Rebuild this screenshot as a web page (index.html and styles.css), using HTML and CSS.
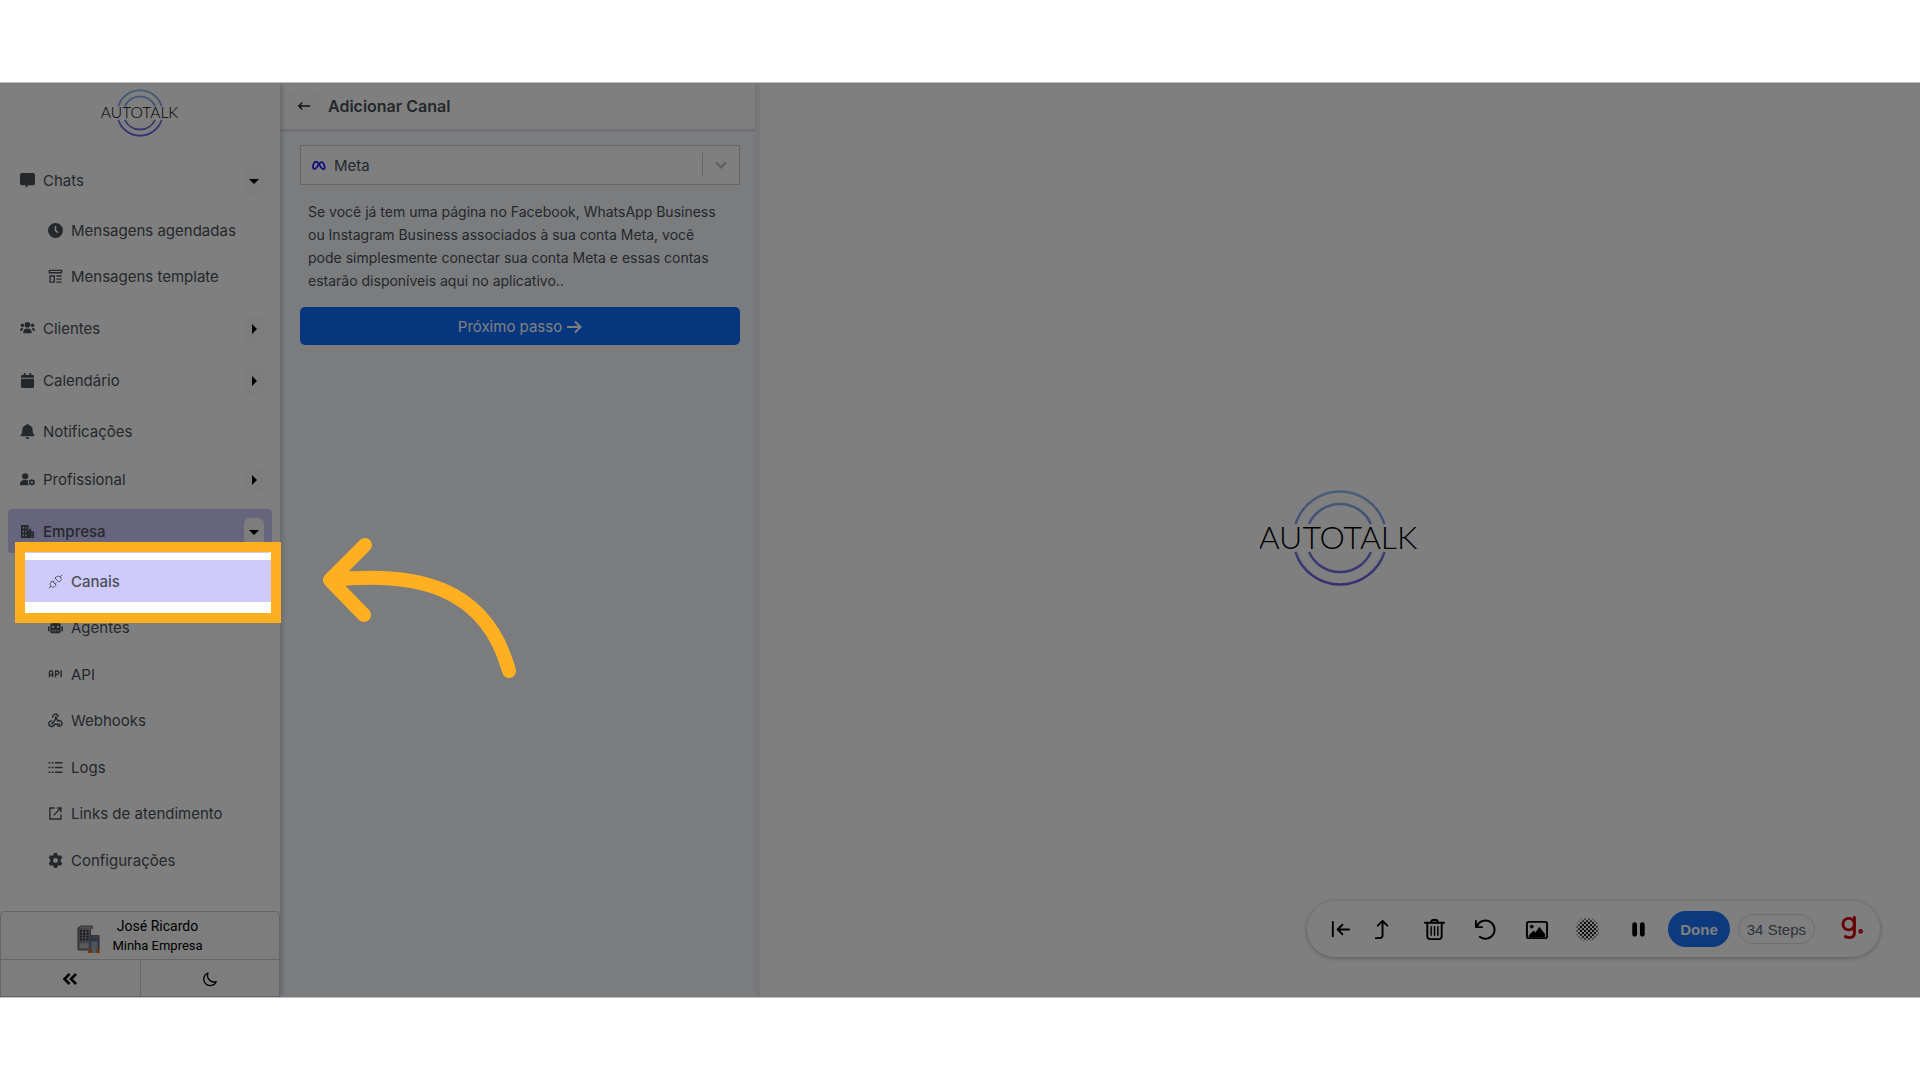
FILE: index.html
```html
<!DOCTYPE html>
<html lang="pt-BR">
<head>
    <meta charset="UTF-8">
    <meta name="viewport" content="width=device-width, initial-scale=1.0">
    <title>Autotalk - Adicionar Canal</title>
    <link rel="stylesheet" href="styles.css">
</head>
<body>
    <div class="app">
        <aside class="sidebar">
            <a href="#" class="brand" aria-label="Autotalk">
                <svg class="logo logo-small" viewBox="0 0 160 98">
                    <defs>
                        <linearGradient id="ring" gradientUnits="userSpaceOnUse" x1="0" y1="3" x2="0" y2="95">
                            <stop offset="0" stop-color="#8fbdf0"/>
                            <stop offset="1" stop-color="#6b5fe0"/>
                        </linearGradient>
                    </defs>
                    <g fill="none" stroke="url(#ring)" stroke-width="4">
                        <path d="M35.500 35A46.700 46.700 0 0 1 124.500 35M49 35A34 34 0 0 1 111 35M35.500 63A46.700 46.700 0 0 0 124.500 63M49 63A34 34 0 0 0 111 63"/>
                    </g>
                    <text x="79" y="60" text-anchor="middle">AUTOTALK</text>
                </svg>
            </a>
            <nav class="menu">
                <div class="item">
                    <a href="#"><svg viewBox="0 0 16 16"><path d="M2 0h12a2 2 0 0 1 2 2v9a2 2 0 0 1-2 2H9L6 16v-3H2a2 2 0 0 1-2-2V2a2 2 0 0 1 2-2z"/></svg>Chats</a>
                    <button type="button" class="toggle open" aria-label="Abrir Chats"></button>
                </div>
                <ul class="sub">
                    <li><a href="#"><svg viewBox="0 0 16 16"><path fill-rule="evenodd" d="M8 0a8 8 0 1 0 0 16A8 8 0 0 0 8 0zM7.200 3.200h1.600v4.500l2.400 1.800-.9 1.300-3.100-2.300z"/></svg>Mensagens agendadas</a></li>
                    <li><a href="#"><svg viewBox="0 0 16 16" class="line"><path stroke-width="1.500" d="M1.500 1.500h13v2.500h-13zM2.200 7.500h4.500v6.500H2.200zM9 7.500h5.500M9 10.800h5.500M9 14h5.500"/></svg>Mensagens template</a></li>
                </ul>
                <div class="item">
                    <a href="#"><svg viewBox="0 0 16 16"><circle cx="8" cy="4" r="3"/><circle cx="2.600" cy="4.500" r="1.900"/><circle cx="13.400" cy="4.500" r="1.900"/><path d="M3.500 13c0-3.500 1.500-5 4.500-5s4.500 1.500 4.500 5zM0 10.500C0 8 1 7 3.800 7.200 2.800 8.200 2.500 9.500 2.500 10.500zM16 10.500C16 8 15 7 12.200 7.200c1 1 1.300 2.300 1.300 3.300z"/></svg>Clientes</a>
                    <button type="button" class="toggle" aria-label="Abrir Clientes"></button>
                </div>
                <div class="item">
                    <a href="#"><svg viewBox="0 0 16 16"><path d="M4 0h2v2h4V0h2v2h1.500A1.500 1.500 0 0 1 15 3.500V5H1V3.500A1.500 1.500 0 0 1 2.500 2H4zM1 6h14v8.500a1.500 1.500 0 0 1-1.500 1.500h-11A1.500 1.500 0 0 1 1 14.500z"/></svg>Calendário</a>
                    <button type="button" class="toggle" aria-label="Abrir Calendário"></button>
                </div>
                <div class="item item-plain">
                    <a href="#"><svg viewBox="0 0 16 16"><path d="M7 0h2v1c3 .5 4.500 2.500 4.500 5 0 3 .5 4.200 1.700 5.500V13H.8v-1.500C2 10.200 2.500 9 2.500 6c0-2.500 1.500-4.500 4.500-5zM6 14h4a2 2 0 0 1-4 0z"/></svg>Notificações</a>
                </div>
                <div class="item">
                    <a href="#"><svg viewBox="0 0 16 16"><circle cx="5.500" cy="4.500" r="3.300"/><path d="M0 14c0-4 1.500-5.500 5.500-5.500 1.500 0 2.700.3 3.500.8L8.300 11 9.500 14z"/><circle cx="12.700" cy="11" r="2" fill="none" stroke="currentColor" stroke-width="1.700"/><path d="M12 7.500h1.400v1.500H12zM12 13h1.400v1.500H12zM9.300 9.500l.7-1.200 1.300.8-.7 1.200zM14.100 12.900l.7-1.200 1.300.8-.7 1.200zM9.300 12.500l1.300-.8.7 1.200-1.300.8zM14.100 9.100l1.300-.8.7 1.200-1.300.8z"/></svg>Profissional</a>
                    <button type="button" class="toggle" aria-label="Abrir Profissional"></button>
                </div>
                <div class="item active">
                    <a href="#"><svg viewBox="0 0 16 16"><path fill-rule="evenodd" d="M1 1h8v6h1V5h2v3h3v7H1zM3 3v2h1.200V3zM5.800 3v2H7V3zM3 7v2h1.200V7zM5.800 7v2H7V7zM3 11v2h1.200v-2zM5.800 11v2H7v-2zM12 10v1.200h1.500V10zM12 12.500v1h1.500v-1z"/></svg>Empresa</a>
                    <button type="button" class="toggle open" aria-label="Abrir Empresa"></button>
                </div>
                <ul class="sub sub-fill">
                    <li class="current">
                        <a href="#"><svg viewBox="0 0 16 16" class="line"><path d="M.8 15.200l2.500-2.500M12.700 3.300L15.200.8M4.200 7.300L8.700 11.800 7 13.500c-1.300 1-3 .7-3.700-.3-1-.9-1.200-2.600-.6-3.700zM7.300 4.200L11.800 8.700 13.500 7c1-1.300.7-3-.3-3.700-.9-1-2.600-1.200-3.700-.6zM5.500 8.500l1.500-1.500M7.500 10.500L9 9"/></svg>Canais</a>
                        <span class="spotlight"></span>
                    </li>
                    <li><a href="#"><svg viewBox="0 0 16 16"><path fill-rule="evenodd" d="M7.200 1h1.600v2.500H12A1.500 1.500 0 0 1 13.500 5v7.500A1.500 1.500 0 0 1 12 14H4a1.500 1.500 0 0 1-1.500-1.500V5A1.500 1.500 0 0 1 4 3.500h3.200zM5.500 6a1.200 1.200 0 1 0 0 2.400 1.200 1.200 0 0 0 0-2.400zM10.500 6a1.200 1.200 0 1 0 0 2.400 1.200 1.200 0 0 0 0-2.400zM4.500 11v1h1.600v-1zM7.200 11v1h1.600v-1zM9.900 11v1h1.600v-1zM0 7h1.700v5H0zM14.300 7H16v5h-1.700z"/></svg>Agentes</a></li>
                    <li><a href="#"><svg viewBox="0 0 16 16" class="line"><path stroke-width="1.500" d="M1.500 11V6Q1.500 4 3.200 4T5 6v5M1.500 8.200H5M8 11V4.300h1.800q1.700 0 1.700 1.900t-1.700 1.900H8M14 3.500V11"/></svg>API</a></li>
                    <li><a href="#"><svg viewBox="0 0 16 16" class="line"><path stroke-width="1.500" d="M5.200 5A2.900 2.900 0 1 1 10.800 4.500M8 3.500L10.500 8.500a3 3 0 1 1-.5 5M8 3.500q1 3-2 6M4.500 8.500a3 3 0 1 0 2.300 3.500h6M3.500 12L6 9.500"/></svg>Webhooks</a></li>
                    <li><a href="#"><svg viewBox="0 0 16 16" class="line"><path stroke-width="1.500" d="M.5 3h2M4 3h2M7.500 3h8M.5 8h2M4 8h2M7.500 8h8M.5 13h2M4 13h2M7.500 13h8"/></svg>Logs</a></li>
                    <li><a href="#"><svg viewBox="0 0 16 16" class="line"><path stroke-width="1.500" d="M7 2.200H2v11.600h11.800V9M9.500 2.200h4.300v4.300M13.500 2.500L6 10"/></svg>Links de atendimento</a></li>
                    <li><a href="#"><svg viewBox="0 0 16 16"><path fill-rule="evenodd" d="M6.400 0h3.200l.5 2.200 1.400.8 2.200-.7 1.600 2.800L13.600 6.700v2.600l1.700 1.600-1.600 2.800-2.200-.7-1.400.8-.5 2.200H6.400l-.5-2.200-1.400-.8-2.200.7L.7 10.900l1.700-1.600V6.700L.7 5.100l1.600-2.800 2.200.7 1.400-.8zM8 5.400a2.600 2.600 0 1 0 0 5.200 2.600 2.600 0 0 0 0-5.200z"/></svg>Configurações</a></li>
                </ul>
            </nav>
            <footer class="account">
                <button type="button" class="profile">
                    <svg viewBox="0 0 24 30">
                        <rect x="1" y="3" width="13" height="23" rx="1" fill="#8a8d96" stroke="#55565c"/>
                        <path d="M1 3l3-2h12v3" fill="#a5a5ac" stroke="#55565c"/>
                        <path d="M4 5v12M7.500 5v12M11 5v12" stroke="#30313b" stroke-width="2" stroke-dasharray="2 1"/>
                        <path d="M3 19h9v5H3z" fill="#b5b5b5"/>
                        <path d="M14 11h9v15h-9z" fill="#8b7468" stroke="#5a5560"/>
                        <circle cx="18" cy="18" r="5" fill="#596f91"/>
                        <path d="M15 17h6l1 9h-8z" fill="#95a8b5"/>
                        <path d="M11 29q1-4 5-4l2 2 2-2q4 0 4 4z" fill="#e0681c"/>
                        <path d="M16 25h4v4h-4z" fill="#a5b8c5"/>
                    </svg>
                    <span class="who"><span>José Ricardo</span><small>Minha Empresa</small></span>
                </button>
                <div class="account-actions">
                    <button type="button" aria-label="Recolher menu"><svg viewBox="0 0 16 16"><path d="M7.500 3l-5 5 5 5M14 3L9 8l5 5" fill="none" stroke="currentColor" stroke-width="2.500"/></svg></button>
                    <button type="button" aria-label="Modo escuro"><svg viewBox="0 0 16 16"><path d="M6 2A6.500 6.500 0 1 0 14.300 10.500 6.500 6.500 0 0 1 6 2z" fill="none" stroke="currentColor" stroke-width="1.300" stroke-linejoin="round"/></svg></button>
                </div>
            </footer>
        </aside>

        <section class="panel">
            <header class="panel-header">
                <button type="button" class="back" aria-label="Voltar"><svg viewBox="0 0 16 16"><path d="M15 8H2.500M6 4L2 8l4 4" fill="none" stroke="currentColor" stroke-width="1.500"/></svg></button>
                <h1>Adicionar Canal</h1>
            </header>
            <form class="channel-form">
                <div class="select-box">
                    <svg class="meta" viewBox="0 0 16 16"><path d="M3 12.500C.5 12.500 1 8.500 2 6.500c1.300-3 3.500-3 5.500 0l3 4.500c1.700 2.500 4 2 4 0 0-2-.4-3.200-1.200-4.500-1.300-2.200-3.300-2.200-5 0L5.500 10.500C4.500 12 4 12.500 3 12.500z"/></svg>
                    <select aria-label="Canal">
                        <option>Meta</option>
                    </select>
                    <svg class="chevron" viewBox="0 0 20 20"><path d="M5 7.500l5 5 5-5"/></svg>
                </div>
                <p>Se você já tem uma página no Facebook, WhatsApp Business ou Instagram Business associados à sua conta Meta, você pode simplesmente conectar sua conta Meta e essas contas estarão disponíveis aqui no aplicativo..</p>
                <button type="button" class="next">Próximo passo <svg viewBox="0 0 16 16"><path d="M1 9h13M9 3.500L14.500 9 9 14.500"/></svg></button>
            </form>
        </section>

        <main class="stage">
            <svg class="logo" viewBox="0 0 160 98" role="img" aria-label="Autotalk">
                <g fill="none" stroke="url(#ring)" stroke-width="2.500">
                    <path d="M35.500 35A46.700 46.700 0 0 1 124.500 35M49 35A34 34 0 0 1 111 35M35.500 63A46.700 46.700 0 0 0 124.500 63M49 63A34 34 0 0 0 111 63"/>
                </g>
                <text x="78" y="60" text-anchor="middle">AUTOTALK</text>
            </svg>
        </main>

        <!-- gravador de passos -->
        <div class="recorder">
            <button type="button" class="collapse" aria-label="Encolher"><svg viewBox="0 0 24 24"><path d="M4 4v15M21 12H9M14 7l-5 5 5 5"/></svg></button>
            <button type="button" aria-label="Mover"><svg viewBox="0 0 24 24"><path d="M4 21h4q3 0 3-3V3M6 8l5-5 5 5"/></svg></button>
            <button type="button" aria-label="Excluir"><svg viewBox="0 0 24 24"><path d="M2 5h20M8.500 5q0-3 2-3h3q2 0 2 3M4.500 5v14q0 3 3 3h9q3 0 3-3V5"/><path stroke-width="1.500" d="M8.500 9v9M12 9v9M15.500 9v9"/></svg></button>
            <button type="button" aria-label="Desfazer"><svg viewBox="0 0 24 24"><path d="M2 3v6.500h6.500M3 9A9.500 9.500 0 1 1 6 19.500"/></svg></button>
            <button type="button" aria-label="Imagem"><svg viewBox="0 0 24 24"><rect x="2" y="4" width="21" height="17" rx="2"/><circle cx="7" cy="9" r="1.500" fill="currentColor" stroke-width="1"/><path d="M4 18l5-5 2 2 4-6 6 8v3H4z" fill="currentColor" stroke="none"/></svg></button>
            <button type="button" aria-label="Desfocar">
                <svg viewBox="0 0 23 23">
                    <defs>
                        <pattern id="dots" width="4" height="4" patternUnits="userSpaceOnUse"><circle cx="1" cy="1" r="1.100" fill="#000" stroke="none"/><circle cx="3" cy="3" r="1.100" fill="#000" stroke="none"/></pattern>
                        <radialGradient id="fade"><stop offset=".6" stop-color="#fff"/><stop offset="1" stop-color="#000"/></radialGradient>
                        <mask id="soft"><circle cx="11.500" cy="11.500" r="13" fill="url(#fade)" stroke="none"/></mask>
                    </defs>
                    <rect width="23" height="23" fill="url(#dots)" stroke="none" mask="url(#soft)"/>
                </svg>
            </button>
            <button type="button" class="pause" aria-label="Pausar"><svg viewBox="0 0 24 24"><path d="M8 7v10M16 7v10" stroke-width="5"/></svg></button>
            <button type="button" class="done">Done</button>
            <button type="button" class="steps">34 Steps</button>
            <a href="#" class="guide" aria-label="Guia"><svg viewBox="0 0 24 24"><circle cx="8" cy="8.500" r="6"/><path d="M14 1.500v16q0 5-5 5-2.500 0-4.500-1"/><circle cx="20.500" cy="16" r="1"/></svg></a>
        </div>

        <svg class="pointer" viewBox="0 0 200 145" aria-hidden="true"><path d="M49 9L14 44 48 79M14 44C100 35 170 50 193 135"/></svg>
    </div>
</body>
</html>
```
FILE: styles.css
```css
* {
    box-sizing: border-box;
}

body {
    margin: 0;
    padding: 82px 0;
    min-height: 100vh;
    display: flex;
    background: #fff;
    font-family: Inter, "Liberation Sans", sans-serif;
    font-size: 15px;
    color: #495057;
}

a {
    color: inherit;
    text-decoration: none;
}

button {
    font-family: inherit;
    border: none;
    cursor: pointer;
    padding: 0;
}

.app {
    position: relative;
    flex: 1;
    display: flex;
    overflow: hidden;
    border-top: 1px solid #bfbfbf;
    border-bottom: 1px solid #bfbfbf;
}

/* Sidebar */
.sidebar {
    position: relative;
    flex: 0 0 280px;
    display: flex;
    flex-direction: column;
    background: #fff;
    box-shadow: 1px 0 6px rgba(70, 70, 110, 0.35);
}

.brand {
    display: flex;
    justify-content: center;
    padding-top: 6px;
}

.logo {
    display: block;
    width: 160px;
    height: 98px;
}

.logo text {
    font-family: Lato, sans-serif;
    font-weight: 300;
    font-size: 32px;
    fill: #000;
}

.logo-small {
    width: 78px;
    height: 48px;
}

.menu {
    flex: 1;
    display: flex;
    flex-direction: column;
    padding: 17px 8px 30px;
}

.item {
    display: flex;
    align-items: center;
    height: 44px;
    margin: 4px 0;
    padding: 0 8px 0 12px;
    border-radius: 4px;
}

.item-plain {
    height: 42px;
    margin-bottom: 1px;
}

.item a,
.sub a {
    flex: 1;
    display: flex;
    align-items: center;
    gap: 8px;
}

.item svg,
.sub svg {
    width: 15px;
    height: 15px;
    fill: currentColor;
}

.menu .line {
    fill: none;
    stroke: currentColor;
    stroke-width: 1;
}

.toggle {
    display: flex;
    align-items: center;
    justify-content: center;
    width: 20px;
    height: 28px;
    margin-top: 2px;
    border-radius: 6px;
    background: #f8faf8;
}

.toggle::before {
    content: "";
    border-left: 5px solid #000;
    border-top: 5px solid transparent;
    border-bottom: 5px solid transparent;
}

.toggle.open::before {
    border-top: 5px solid #000;
    border-left: 5px solid transparent;
    border-right: 5px solid transparent;
    border-bottom: none;
}

.active {
    background: #cfcafa;
    font-weight: 500;
}

.sub {
    list-style: none;
    margin: 3px 0 5px 8px;
    padding: 0;
    display: flex;
    flex-direction: column;
    gap: 4px;
}

.sub-fill {
    flex: 1;
    justify-content: space-between;
    gap: 0;
    margin-bottom: 0;
}

.sub li {
    position: relative;
    display: flex;
    height: 42px;
    padding-left: 32px;
}

.sub .current {
    background: #cfcafa;
    font-weight: 500;
}

/* highlights the current step and dims the rest */
.spotlight {
    position: absolute;
    z-index: 10;
    left: -1px;
    right: -9px;
    top: -18px;
    bottom: -21px;
    border: 10px solid #ffb020;
    box-shadow: 0 0 0 2400px rgba(0, 0, 0, 0.5);
    pointer-events: none;
}

.account {
    border: 1px solid #c9cacf;
    border-radius: 4px 4px 0 0;
    background: #f8faf8;
}

.profile {
    display: flex;
    align-items: center;
    justify-content: center;
    gap: 12px;
    width: 100%;
    height: 48px;
    background: none;
    border-bottom: 1px solid #c9cacf;
    color: #000;
}

.profile svg {
    width: 23px;
    height: 29px;
    margin-top: 8px;
}

.who {
    display: flex;
    flex-direction: column;
    font-family: Roboto, sans-serif;
    font-size: 14px;
    line-height: 20px;
}

.who small {
    font-size: 13px;
}

.account-actions {
    display: flex;
}

.account-actions button {
    flex: 1;
    display: flex;
    align-items: center;
    justify-content: center;
    height: 36px;
    padding-top: 2px;
    background: none;
    color: #000;
}

.account-actions button + button {
    border-left: 1px solid #c9cacf;
}

.account-actions svg {
    width: 16px;
    height: 16px;
}

/* Channel panel */
.panel {
    flex: 0 0 480px;
    background: #f6f9fd;
    border-right: 5px solid #f0f1f4;
}

.panel-header {
    display: flex;
    align-items: center;
    gap: 8px;
    height: 47px;
    padding: 0 8px;
    background: #fff;
    border-bottom: 1px solid #e0e1e6;
    box-shadow: 0 1px 2px rgba(70, 70, 110, 0.2);
}

.panel-header h1 {
    margin: 0;
    font-size: 16px;
    font-weight: 600;
}

.back {
    display: flex;
    align-items: center;
    justify-content: center;
    width: 32px;
    height: 32px;
    border-radius: 4px;
    background: #f8faf8;
    color: #222;
}

.back svg {
    width: 14px;
    height: 14px;
}

.channel-form {
    padding: 15px 15px 15px 20px;
}

.select-box {
    display: flex;
    align-items: center;
    height: 40px;
    padding: 0 8px 0 11px;
    background: #fff;
    border: 1px solid #ccc;
}

.meta {
    width: 14px;
    height: 14px;
    fill: none;
    stroke: #1a1aff;
    stroke-width: 2;
}

.select-box select {
    flex: 1;
    height: 24px;
    padding: 0;
    margin-left: 8px;
    appearance: none;
    background: none;
    border: none;
    border-right: 1px solid #ccc;
    font: inherit;
    color: inherit;
}

.chevron {
    width: 20px;
    height: 20px;
    margin-left: 8px;
    fill: none;
    stroke: #bbb;
    stroke-width: 2;
}

.channel-form p {
    margin: 15px 0;
    padding: 0 17px 0 8px;
    font-size: 14px;
    line-height: 23px;
}

.next {
    display: flex;
    align-items: center;
    justify-content: center;
    gap: 4px;
    width: 100%;
    height: 38px;
    border-radius: 5px;
    background: #0d6efd;
    color: #fff;
    font-size: 15px;
}

.next svg {
    width: 16px;
    height: 16px;
    fill: none;
    stroke: currentColor;
    stroke-width: 2;
}

.stage {
    flex: 1;
    display: flex;
    align-items: center;
    justify-content: center;
    padding-bottom: 4px;
    background: #fff;
}

/* Step recorder bar */
.recorder {
    position: absolute;
    right: 40px;
    bottom: 40px;
    display: flex;
    align-items: center;
    height: 56px;
    padding: 0 16px 0 22px;
    border-radius: 28px;
    background: #fff;
    box-shadow: 0 1px 5px rgba(0, 0, 0, 0.3);
    font-family: "Liberation Sans", sans-serif;
}

.recorder button {
    display: flex;
    background: none;
    color: #000;
    margin-right: 28px;
}

.recorder .collapse {
    margin-right: 20px;
}

.recorder .pause {
    margin-right: 18px;
}

.recorder svg {
    width: 23px;
    height: 23px;
    fill: none;
    stroke: currentColor;
    stroke-width: 2;
    stroke-linecap: round;
    stroke-linejoin: round;
}

.recorder .done {
    align-items: center;
    height: 36px;
    margin-right: 8px;
    padding: 0 12px;
    border-radius: 18px;
    background: #1a73ff;
    color: #fff;
    font-size: 15px;
    font-weight: 700;
}

.recorder .steps {
    align-items: center;
    height: 30px;
    margin-right: 26px;
    padding: 0 8px;
    border: 1px solid #dcdfe6;
    border-radius: 15px;
    color: #5c6475;
    font-size: 15px;
}

.recorder .guide {
    color: #d3000d;
}

.guide svg {
    stroke-width: 3;
}

/* Arrow pointing to the highlighted item */
.pointer {
    position: absolute;
    z-index: 11;
    left: 316px;
    top: 453px;
    width: 200px;
    height: 145px;
    fill: none;
    stroke: #ffb020;
    stroke-width: 14;
    stroke-linecap: round;
    stroke-linejoin: round;
}
```
